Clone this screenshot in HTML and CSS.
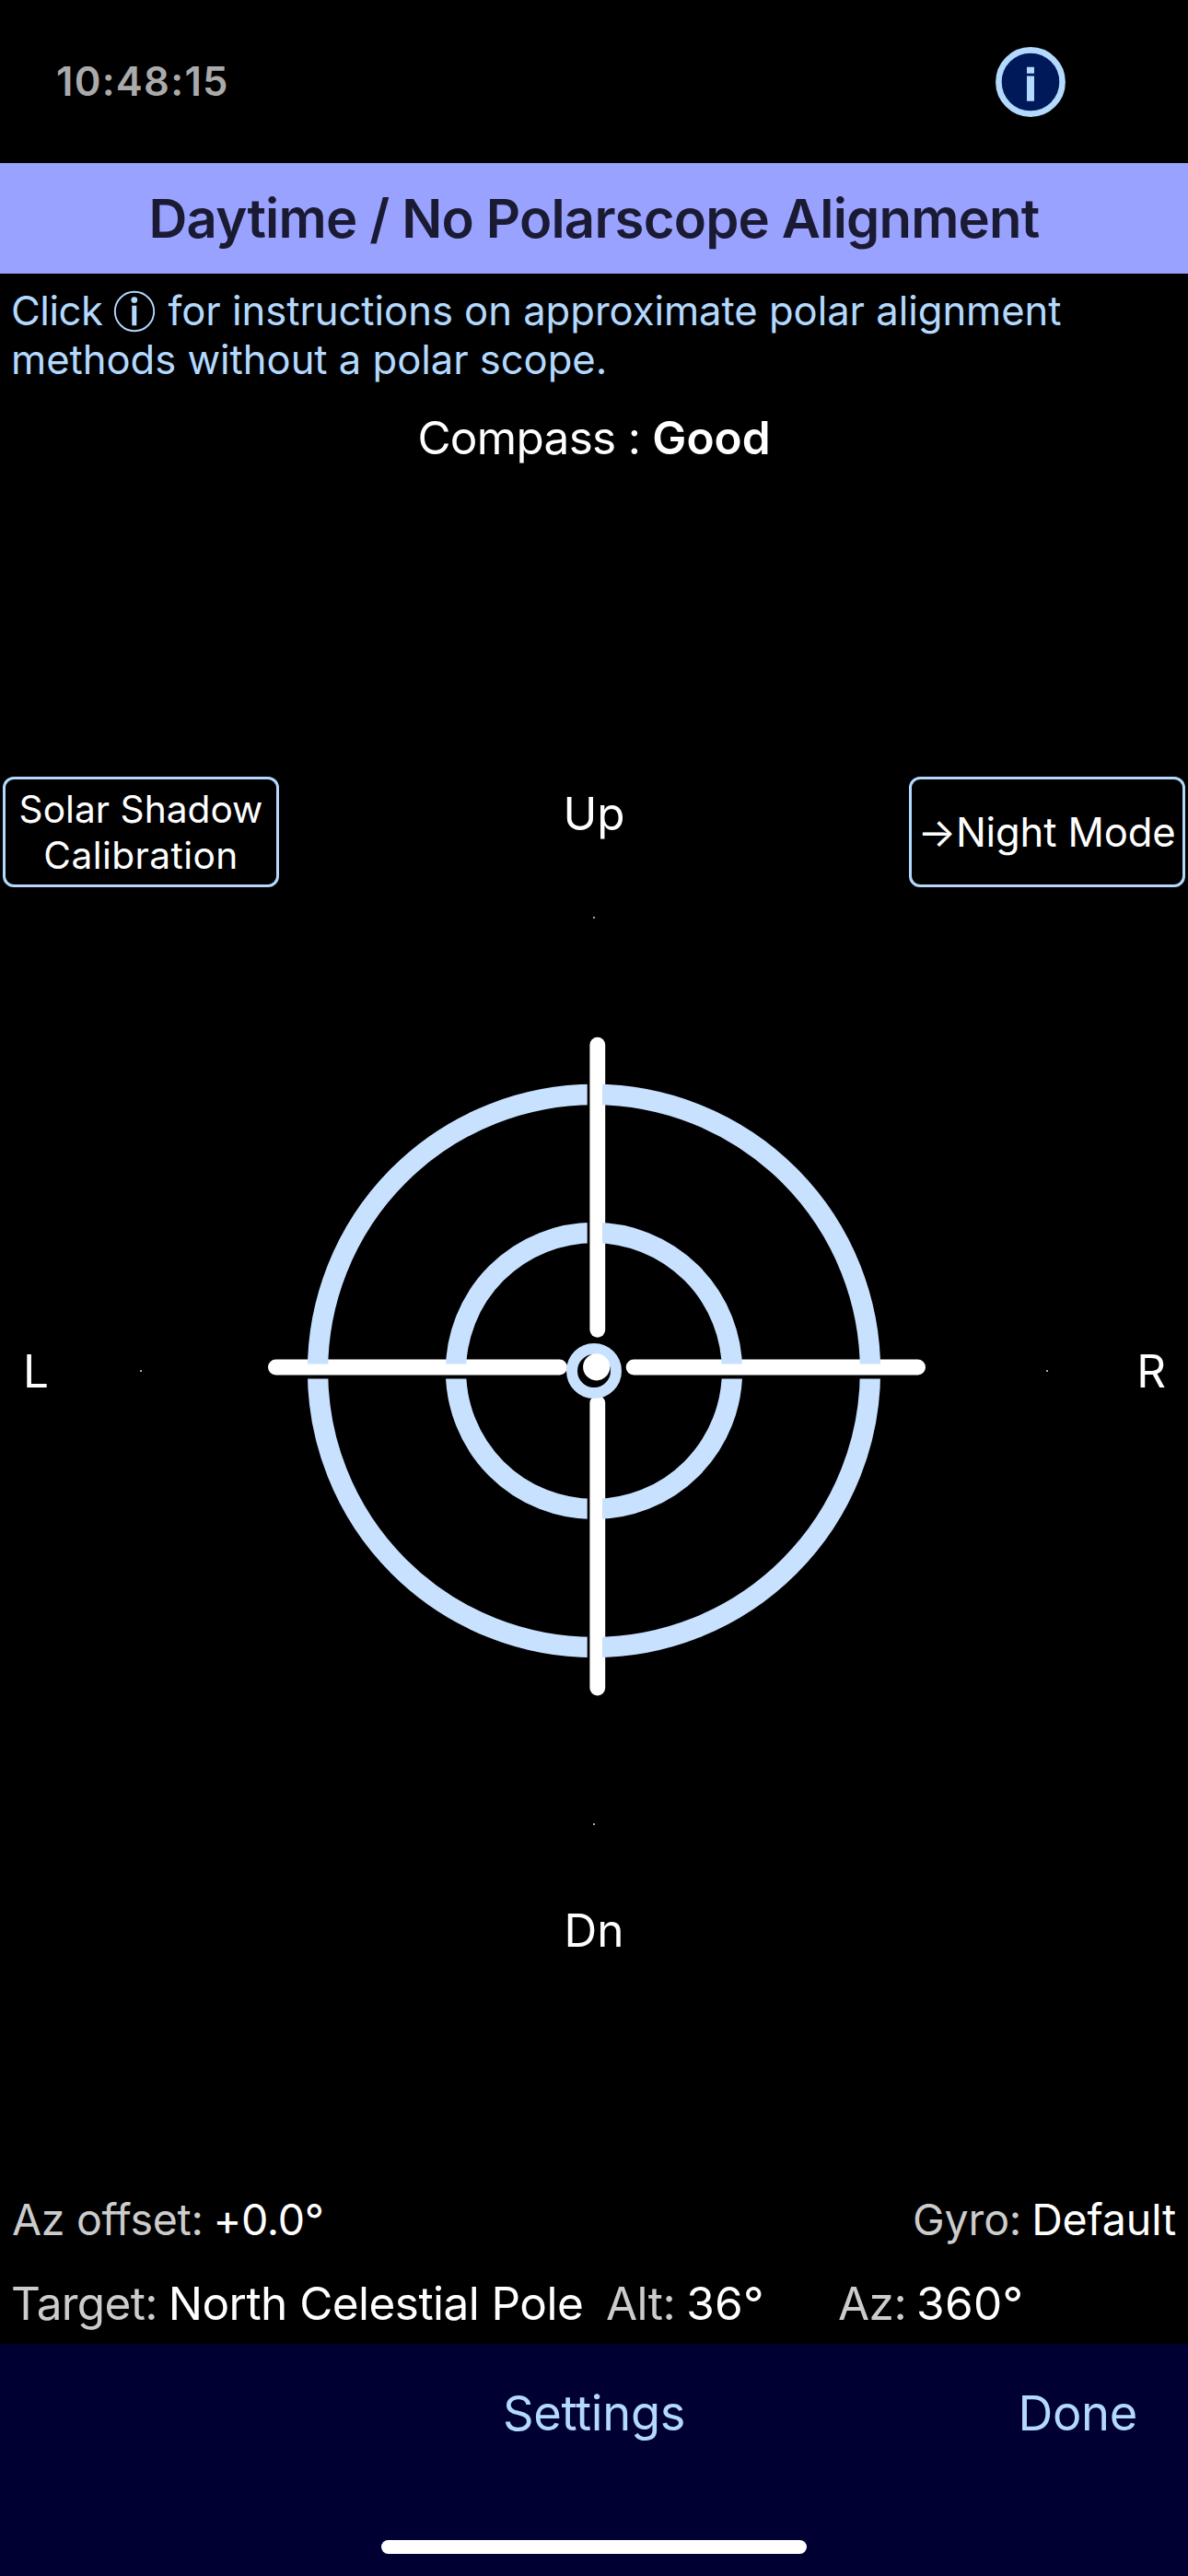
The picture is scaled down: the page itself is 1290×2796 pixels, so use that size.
FILE: index.html
```html
<!DOCTYPE html>
<html lang="en">
<head>
<meta charset="utf-8">
<title>Daytime / No Polarscope Alignment</title>
<link rel="stylesheet" href="styles.css">
</head>
<body>
<header class="status">
  <time class="clock">10:48:15</time>
  <svg class="info-button" width="76" height="76" viewBox="0 0 76 76" role="img" aria-label="Info">
    <circle cx="38" cy="38" r="34.6" fill="#001a59" stroke="#b3d9ff" stroke-width="6.6"/>
    <path fill="#b3d9ff" d="M34 21.7h8v7h-8zM34 31.4h8v27.3h-8z"/>
  </svg>
</header>

<h1 class="banner">Daytime / No Polarscope Alignment</h1>

<p class="hint"><span class="click">Click</span><svg class="hint-icon" width="46" height="46" viewBox="0 0 46 46" aria-hidden="true"><circle cx="23" cy="23" r="21.2" fill="none" stroke="#b3d9ff" stroke-width="1.9"/><circle cx="22.8" cy="10.6" r="3.4" fill="#b3d9ff"/><path fill="#b3d9ff" d="M20.3 16.7h5v21.6h-5z"/></svg>for instructions on approximate polar alignment<br>methods without a polar scope.</p>

<p class="compass"><span class="compass-label">Compass :</span><strong>Good</strong></p>

<main class="stage">
  <div class="controls">
    <button class="box-button solar">Solar Shadow<br><span class="calibration">Calibration</span></button>
    <span class="direction up">Up</span>
    <button class="box-button night">→Night Mode</button>
  </div>
  <div class="scope-row">
    <span class="direction">L</span>
    <svg class="scope" width="1000" height="1000" viewBox="145 988 1000 1000" aria-hidden="true">
      <g fill="#fff">
        <rect x="640.4" y="1125.7" width="16.8" height="326" rx="8.4"/>
        <rect x="640.4" y="1514.5" width="16.8" height="326" rx="8.4"/>
        <rect x="291" y="1475.4" width="325" height="17" rx="8.5"/>
        <rect x="679.7" y="1475.4" width="325.3" height="17" rx="8.5"/>
      </g>
      <!-- Rings are broken into quadrants by a 16px gap on each axis -->
      <clipPath id="quadrants">
        <path d="M300 1140h337.7v340.5H300zM654 1140h340v340.5H654zM300 1496.5h337.7V1840H300zM654 1496.5h340V1840H654z"/>
      </clipPath>
      <g clip-path="url(#quadrants)" fill="none" stroke="#c8e1ff" stroke-width="22.3">
        <circle cx="645" cy="1488" r="300"/>
        <circle cx="645" cy="1488" r="150"/>
      </g>
      <circle cx="645" cy="1488" r="24" fill="#000" stroke="#c8e1ff" stroke-width="12"/>
      <circle cx="647.7" cy="1483.8" r="14.6" fill="#fff"/>
      <g fill="#aaa">
        <rect x="644" y="995" width="2" height="2"/>
        <rect x="644" y="1979" width="2" height="2"/>
        <rect x="152" y="1487" width="2" height="2"/>
        <rect x="1136" y="1487" width="2" height="2"/>
      </g>
    </svg>
    <span class="direction">R</span>
  </div>
  <span class="direction down">Dn</span>
</main>

<section class="readouts">
  <div class="row row-top">
    <div class="reading offset"><span class="label">Az offset:</span><span>+0.0°</span></div>
    <div class="reading gyro"><span class="label">Gyro:</span><span>Default</span></div>
  </div>
  <div class="row row-bottom">
    <div class="reading target"><span class="label">Target:</span><span>North Celestial Pole</span></div>
    <div class="reading alt"><span class="label">Alt:</span><span class="angle">36°</span></div>
    <div class="reading az"><span class="label">Az:</span><span class="angle">360°</span></div>
  </div>
</section>

<footer class="toolbar">
  <nav class="actions">
    <a class="settings">Settings</a>
    <a class="done">Done</a>
  </nav>
  <div class="home-indicator"></div>
</footer>
</body>
</html>
```
FILE: styles.css
```css
* { box-sizing: border-box; }

body {
  margin: 0;
  width: 1290px;
  height: 2796px;
  display: flex;
  flex-direction: column;
  background: #000;
  color: #fff;
  font-family: Inter, "Liberation Sans", sans-serif;
  overflow: hidden;
}

.status {
  height: 177px;
  padding: 0 133px 0 61px;
  display: flex;
  align-items: center;
  justify-content: space-between;
}

.clock {
  margin-top: 1px;
  color: #aaa;
  font-size: 43.6px;
  font-weight: 600;
  line-height: 60px;
  letter-spacing: 1.25px;
}

.banner {
  margin: 0;
  height: 120px;
  background: #99a3ff;
  color: #1a1a33;
  font-size: 58px;
  font-weight: 600;
  line-height: 120px;
  letter-spacing: -0.8px;
  text-align: center;
}

.hint {
  margin: 0;
  padding: 14px 12px 0;
  height: 148px;
  color: #b3d9ff;
  font-size: 43.6px;
  line-height: 53px;
  letter-spacing: -0.04px;
  white-space: nowrap;
}

.click { letter-spacing: -0.47px; }

.hint-icon {
  margin: -10px 13px -10px 12px;
  vertical-align: 3px;
  transform: translateY(9px);
  margin-top: -20px;
  vertical-align: 11px;
}

.compass {
  margin: 0;
  height: 60px;
  display: flex;
  justify-content: center;
  gap: 13px;
  font-size: 49.5px;
  line-height: 60px;
}

.compass-label { letter-spacing: -0.7px; }

.compass strong { font-weight: 600; letter-spacing: 0; }

.stage {
  flex: 1;
  display: flex;
  flex-direction: column;
  align-items: center;
  padding-top: 338px;
}

.controls {
  width: 100%;
  height: 120px;
  padding: 0 3px;
  display: flex;
  justify-content: space-between;
}

.box-button {
  width: 300px;
  height: 120px;
  padding: 0;
  border: 3px solid #b3d9ff;
  border-radius: 12px;
  background: #000;
  color: #fff;
  font-family: inherit;
  white-space: nowrap;
}

.solar { font-size: 40.7px; line-height: 50px; padding-top: 1px; }

.calibration { letter-spacing: 0.4px; }

.night { font-size: 43.6px; line-height: 54px; padding: 1px 1px 0 0; letter-spacing: -0.15px; }

.direction { font-size: 49.5px; line-height: 60px; }

.up { margin-top: 10px; }

.scope-row {
  width: 100%;
  margin-top: 25px;
  padding: 0 24px 0 25px;
  display: flex;
  align-items: center;
  justify-content: space-between;
}

.scope { margin: 0 -11px 0 -9px; }

.down { margin-top: 77px; }

.readouts {
  height: 165px;
  display: flex;
  flex-direction: column;
  gap: 31px;
}

.row {
  display: flex;
  line-height: 60px;
  white-space: nowrap;
}

.row-top {
  justify-content: space-between;
  padding: 0 13px;
  font-size: 46.5px;
  letter-spacing: -0.15px;
}

.offset { letter-spacing: -0.3px; }

.row-bottom {
  padding-left: 12px;
  font-size: 49.5px;
  letter-spacing: -0.55px;
}

.reading { display: flex; gap: 11px; }

.label { color: #ccc; }

.angle { letter-spacing: 0.3px; }

.target { width: 646px; }

.target .label { letter-spacing: -0.7px; }

.alt { width: 252px; }

.alt, .target { gap: 12px; }

.toolbar {
  height: 252px;
  padding-top: 40px;
  background: #000033;
  display: flex;
  flex-direction: column;
  align-items: center;
}

.actions {
  width: 100%;
  display: grid;
  grid-template-columns: 1fr auto 1fr;
  padding: 0 55px;
  color: #b3d9ff;
  font-size: 52.4px;
  line-height: 70px;
  letter-spacing: -0.3px;
}

.settings { grid-column: 2; }

.done { text-align: right; }

.home-indicator {
  width: 462px;
  height: 15px;
  margin-top: 103px;
  border-radius: 8px;
  background: #fff;
}
```
